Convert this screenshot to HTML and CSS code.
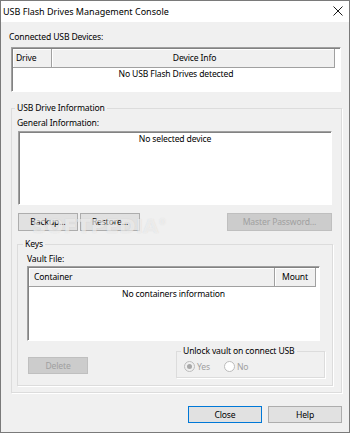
FILE: index.html
```html
<!DOCTYPE html>
<html>
    <head>
        <meta charset="UTF-8" />
        <title>USB Flash Drives Management Console</title>
        <link rel="stylesheet" href="styles.css">
    </head>
    <body>
        <div class="window">
            <div class="titlebar">
                <span class="titleText">USB Flash Drives Management Console</span>
                <svg class="closeIcon" width="10" height="10" viewBox="0 0 10 10">
                    <path d="M0.5 0.5 L9.5 9.5 M9.5 0.5 L0.5 9.5" stroke="#1a1a1a" stroke-width="1" fill="none" />
                </svg>
            </div>
            <div class="content">
                <div class="label connLabel">Connected USB Devices:</div>
                <div class="listBox devList">
                    <div class="listHead">
                        <div class="col colDrive">Drive</div>
                        <div class="col colInfo">Device Info</div>
                    </div>
                    <div class="emptyText">No USB Flash Drives detected</div>
                </div>

                <fieldset class="group driveGroup">
                    <legend class="groupTitle">USB Drive Information</legend>
                    <div class="driveInner">
                        <div class="label">General Information:</div>
                        <div class="infoBox">
                            <div class="emptyText">No selected device</div>
                        </div>
                        <div class="btnRow">
                            <div class="btnLeft">
                                <button type="button" class="btn">Backup...</button>
                                <button type="button" class="btn">Restore...</button>
                            </div>
                            <button type="button" class="btn btnMaster" disabled>Master Password...</button>
                            <div class="watermark">SOFTPEDIA<sup>®</sup></div>
                        </div>

                        <fieldset class="group keysGroup">
                            <legend class="groupTitle keysTitle">Keys</legend>
                            <div class="keysInner">
                                <div class="label vaultLabel">Vault File:</div>
                                <div class="listBox vaultList">
                                    <div class="listHead">
                                        <div class="col colContainer">Container</div>
                                        <div class="col colMount">Mount</div>
                                    </div>
                                    <div class="emptyText vaultEmpty">No containers information</div>
                                </div>
                                <div class="keysBottom">
                                    <button type="button" class="btn btnDelete" disabled>Delete</button>
                                    <fieldset class="group unlockGroup">
                                        <legend class="groupTitle unlockTitle">Unlock vault on connect USB</legend>
                                        <div class="radioRow">
                                            <span class="radio checked"></span><span class="radioText">Yes</span>
                                            <span class="radio radioNo"></span><span class="radioText">No</span>
                                        </div>
                                    </fieldset>
                                </div>
                            </div>
                        </fieldset>
                    </div>
                </fieldset>

                <div class="footer">
                    <button type="button" class="btn btnFooter btnDefault">Close</button>
                    <button type="button" class="btn btnFooter">Help</button>
                </div>
            </div>
        </div>
    </body>
</html>
```

FILE: styles.css
```css
body {
    margin: 0;
    font-family: "Noto Sans", sans-serif;
    font-size: 8.6px;
    letter-spacing: -0.15px;
    color: #000;
}
.window {
    width: 350px;
    height: 433px;
    box-sizing: border-box;
    border: 1px solid #7a7a7a;
    background-color: #f0f0f0;
    display: flex;
    flex-direction: column;
}
.titlebar {
    height: 21px;
    flex: none;
    background-color: #fff;
    display: flex;
    align-items: center;
    justify-content: space-between;
    padding: 0 6px 0 2px;
}
.titleText {
    font-size: 9px;
    letter-spacing: 0;
    color: #000;
}
.closeIcon {
    margin-top: -2px;
}
.content {
    flex: 1;
    padding: 8px 0 0 8px;
}
.label {
    line-height: 15px;
    white-space: nowrap;
}
.listBox {
    box-sizing: border-box;
    background-color: #fff;
    border: 1px solid;
    border-color: #a0a0a0 #fff #fff #a0a0a0;
    box-shadow: inset 1px 1px 0 #828282;
}
.devList {
    margin: 2px 0 0 2px;
    width: 330px;
    height: 45px;
}
.listHead {
    display: flex;
    height: 20px;
    margin-left: 1px;
    margin-top: 1px;
}
.col {
    box-sizing: border-box;
    height: 19px;
    line-height: 19px;
    background-color: #f0f0f0;
    border-right: 1px solid #a0a0a0;
    border-bottom: 1px solid #a0a0a0;
    box-shadow: inset 1px 1px 0 #fff;
    padding-left: 3px;
    white-space: nowrap;
}
.colDrive {
    width: 39px;
}
.colInfo {
    width: 283px;
    text-align: center;
}
.colContainer {
    width: 246px;
    padding-left: 5px;
}
.colMount {
    width: 41px;
    padding-left: 7px;
}
.emptyText {
    text-align: center;
    line-height: 11px;
}
.vaultEmpty {
    line-height: 13px;
}
.group {
    box-sizing: border-box;
    margin: 0;
    padding: 0;
    border: 1px solid #dcdcdc;
    box-shadow: 1px 1px 0 #fff;
    min-width: 0;
}
.groupTitle {
    padding: 0 2px;
    line-height: 15px;
    white-space: nowrap;
}
.driveGroup {
    margin: 9px 0 0 2px;
    width: 331px;
    height: 292px;
}
.driveGroup > .groupTitle {
    margin-left: 3px;
}
.driveInner {
    padding-left: 5px;
}
.infoBox {
    box-sizing: border-box;
    width: 314px;
    height: 74px;
    margin-left: 1px;
    background-color: #fff;
    border: 1px solid;
    border-color: #a0a0a0 #fff #fff #a0a0a0;
    box-shadow: inset 1px 1px 0 #828282;
    padding-top: 2px;
}
.btnRow {
    position: relative;
    display: flex;
    justify-content: space-between;
    width: 314px;
    margin: 8px 0 0 1px;
}
.btnLeft {
    display: flex;
    gap: 2px;
}
.btn {
    box-sizing: border-box;
    height: 18px;
    width: 60px;
    padding: 0;
    font-family: "Noto Sans", sans-serif;
    font-size: 8.6px;
    letter-spacing: -0.15px;
    color: #000;
    background-color: #e1e1e1;
    border: 1px solid #adadad;
    border-radius: 0;
}
.btn:disabled {
    background-color: #cccccc;
    border-color: #bfbfbf;
    color: #a0a0a0;
}
.btnMaster {
    width: 105px;
}
.watermark {
    position: absolute;
    left: 14px;
    top: 1px;
    font-family: "DejaVu Sans", sans-serif;
    font-weight: bold;
    font-size: 20px;
    letter-spacing: 0;
    color: rgba(255, 255, 255, 0.55);
    text-shadow: 0 0 1px rgba(160, 160, 160, 0.35);
    pointer-events: none;
}
.watermark sup {
    font-size: 8px;
}
.keysGroup {
    margin-top: 6px;
    width: 316px;
    height: 149px;
}
.keysTitle {
    margin-left: 5px;
}
.keysInner {
    padding-left: 9px;
}
.vaultLabel {
    line-height: 14px;
}
.vaultList {
    width: 293px;
    height: 75px;
}
.keysBottom {
    display: flex;
    align-items: flex-start;
    margin-top: 3px;
}
.btnDelete {
    margin: 13px 0 0 1px;
    height: 17px;
}
.unlockGroup {
    margin-left: 88px;
    width: 149px;
    height: 34px;
}
.unlockTitle {
    margin-left: 4px;
}
.radioRow {
    display: flex;
    align-items: center;
    height: 15px;
    padding-left: 7px;
    color: #a0a0a0;
}
.radio {
    box-sizing: border-box;
    width: 11px;
    height: 11px;
    border-radius: 50%;
    border: 1px solid #bcbcbc;
    background-color: #fff;
    display: flex;
    align-items: center;
    justify-content: center;
}
.radio.checked {
    background-color: #f0f0f0;
}
.radio.checked::after {
    content: "";
    width: 5px;
    height: 5px;
    border-radius: 50%;
    background-color: #a8a8a8;
}
.radioText {
    margin-left: 2px;
}
.radioNo {
    margin-left: 14px;
}
.footer {
    display: flex;
    justify-content: flex-end;
    gap: 6px;
    margin-top: 13px;
    padding-right: 7px;
}
.btnFooter {
    width: 74px;
    height: 17px;
}
.btnDefault {
    border-color: #0078d7;
}
```
